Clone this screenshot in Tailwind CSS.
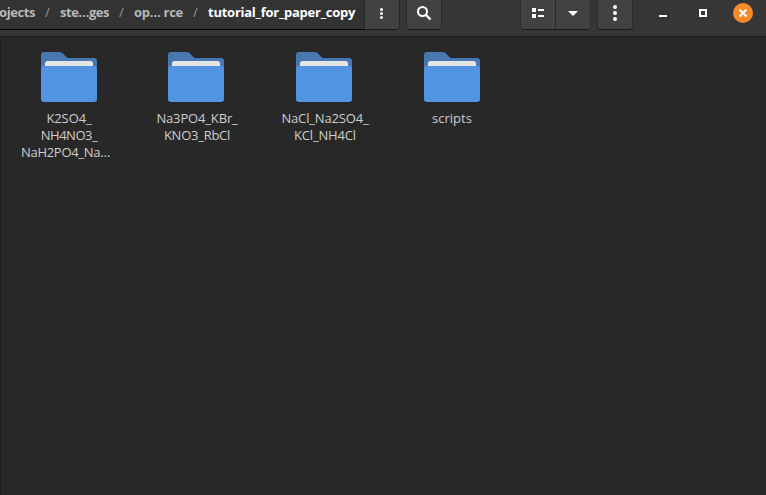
<!DOCTYPE html>
<html lang="en"><head><meta charset="utf-8"><title>Files</title>
<script src="https://cdn.jsdelivr.net/npm/@tailwindcss/browser@4"></script></head>
<body class="flex h-[495px] w-[766px] flex-col overflow-hidden bg-[#282828] font-['Open_Sans',sans-serif] text-[13px]">
<svg class="hidden"><symbol id="folder" viewBox="0 0 56 50">
<path d="M0 20V3Q0 0 3 0H18.500Q20.500 0 22 1.500L25 4.700Q26.500 6 28.500 6H53Q56 6 56 9V20Z" fill="#4877b1"/>
<path d="M4 18V11.500Q4 9 6.500 9H49.500Q52 9 52 11.500V18Z" fill="#e4e4e4"/>
<path d="M0 17Q0 14 3 14H53Q56 14 56 17V47Q56 50 53 50H3Q0 50 0 47Z" fill="#5294e2"/>
</symbol></svg>
<header class="flex h-9 shrink-0 items-start bg-[#363636]">
  <nav class="flex h-[30px] w-[364px] shrink-0 border-b border-black bg-[#333333] font-bold leading-[25px] text-[#b8b8b8] whitespace-pre">
    <span class="w-[45px] -ml-px mr-px tracking-[-0.42px]">ojects</span><span class="w-[15px] font-normal text-[#999]">/</span><span class="w-[59px] tracking-[-0.48px]">ste…ges</span><span class="w-[15px] font-normal text-[#999]">/</span><span class="w-[59px] tracking-[-0.3px]">op… rce</span><span class="w-[15px] font-normal text-[#999]">/</span><span class="tracking-[-0.25px] text-white">tutorial_for_paper_copy</span>
  </nav>
  <button class="flex h-[30px] w-[36px] shrink-0 justify-center rounded-br-[4px] border-x border-b border-x-[#282828] border-b-[#1a1a1a] bg-[#424242]"><svg width="34" height="29" fill="#fff"><circle cx="16.500" cy="9.500" r="1.500"/><circle cx="16.500" cy="13.500" r="1.500"/><circle cx="16.500" cy="17.500" r="1.500"/></svg></button>
  <button class="ml-1.5 h-[30px] w-[36px] shrink-0 rounded-b-[4px] border-x border-b border-x-[#2b2b2b] border-b-[#1a1a1a] bg-[#424242]"><svg width="34" height="29" fill="none" stroke="#fff" stroke-width="2"><circle cx="15.500" cy="11.500" r="4.500"/><path d="M19 15L23.500 19.500" stroke-width="2.400"/></svg></button>
  <div class="ml-[78px] flex h-[30px] w-[71px] shrink-0 rounded-b-[4px] border-x border-b border-x-[#2b2b2b] border-b-[#1a1a1a] bg-[#424242]">
    <button class="w-[35px] border-r border-[#2b2b2b]"><svg width="34" height="29" fill="#fff"><path d="M11 8h4v4h-4zM11 14h4v4h-4zM17 9h6v2h-6zM17 15h6v2h-6z"/></svg></button>
    <button><svg width="34" height="29" fill="#fff"><path d="M12 11h10l-5 5z"/></svg></button>
  </div>
  <button class="ml-1.5 h-[30px] w-[36px] shrink-0 rounded-b-[4px] border-x border-b border-x-[#2b2b2b] border-b-[#1a1a1a] bg-[#424242]"><svg width="34" height="29" fill="#fff"><circle cx="17" cy="7" r="2"/><circle cx="17" cy="13" r="2"/><circle cx="17" cy="19" r="2"/></svg></button>
  <svg class="shrink-0" width="133" height="30" fill="#fff"><path d="M26 15h8v2h-8z"/><path d="M67 10h6v6h-6z" fill="none" stroke="#fff" stroke-width="2"/><circle cx="110" cy="13" r="10" fill="#f68b28"/><path d="M106.500 9.500l7 7m0-7l-7 7" stroke="#fff" stroke-width="2"/></svg>
</header>
<main class="flex grow items-start border-l border-t border-[#202020] pl-1 text-center leading-[17px] text-[#cdcdcd]">
  <figure class="flex w-32 flex-col items-center pt-[15px]"><svg class="mb-2 h-[50px] w-14"><use href="#folder"/></svg><figcaption class="flex flex-col whitespace-nowrap"><span class="tracking-[-0.1px]">K2SO4_</span><span class="tracking-[-0.5px]">NH4NO3_</span><span class="-ml-[7px] tracking-[-0.3px]">NaH2PO4_Na…</span></figcaption></figure>
  <figure class="-ml-px flex w-32 flex-col items-center pt-[15px]"><svg class="mb-2 h-[50px] w-14"><use href="#folder"/></svg><figcaption class="ml-0.5 flex flex-col whitespace-nowrap"><span class="tracking-[-0.15px]">Na3PO4_KBr_</span><span class="tracking-[-0.25px]">KNO3_RbCl</span></figcaption></figure>
  <figure class="flex w-32 flex-col items-center pt-[15px]"><svg class="mb-2 h-[50px] w-14"><use href="#folder"/></svg><figcaption class="ml-0.5 flex flex-col whitespace-nowrap"><span class="tracking-[-0.15px]">NaCl_Na2SO4_</span><span class="tracking-[-0.15px]">KCl_NH4Cl</span></figcaption></figure>
  <figure class="flex w-32 flex-col items-center pt-[15px]"><svg class="mb-2 h-[50px] w-14"><use href="#folder"/></svg><figcaption>scripts</figcaption></figure>
</main>
</body></html></script>
